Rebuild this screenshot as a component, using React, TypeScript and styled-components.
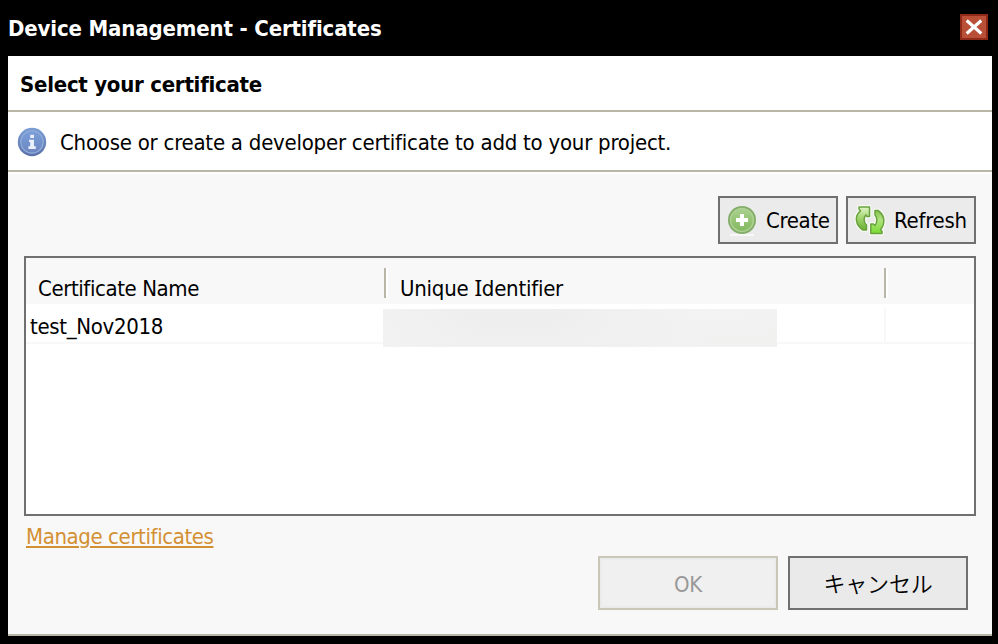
import React from "react";
import styled, { createGlobalStyle } from "styled-components";

const GlobalStyle = createGlobalStyle`
  * { box-sizing: border-box; }
  body { margin: 0; background: #000; }
  button { font: inherit; padding: 0; margin: 0; }
`;

const Dialog = styled.div`
  width: 998px;
  height: 644px;
  padding: 0 6px 8px 8px;
  display: flex;
  flex-direction: column;
  background: #000;
  color: #000;
  font: 22px/30px "DejaVu Sans Condensed", "DejaVu Sans", "Noto Sans CJK JP", sans-serif;
  font-stretch: condensed;
`;

const Label = styled.span<{ $spacing?: number; $bold?: boolean }>`
  display: block;
  margin: ${(p) => (p.$bold ? "0" : "1px 0 -1px")};
  white-space: nowrap;
  font-weight: ${(p) => (p.$bold ? 700 : 400)};
  letter-spacing: ${(p) => p.$spacing ?? (p.$bold ? -0.15 : -0.24)}px;
`;

const SerifedCapital = styled.span`
  font-family: "Noto Sans", sans-serif;
  font-size: 22.4px;
  line-height: 1;
`;

const JapaneseLabel = styled.span`
  margin: -2px 0 2px;
  font: 350 22px/30px "Noto Sans CJK JP", sans-serif;
  letter-spacing: -0.2px;
`;

const TitleBar = styled.header`
  height: 56px;
  flex: none;
  display: flex;
  justify-content: space-between;
  align-items: flex-start;
  padding: 14px 4px 0 0;
  color: #fff;
`;

const CloseButton = styled.button`
  width: 28px;
  height: 26px;
  border: 2px solid #8f2a18;
  background: #b94f37;
  display: grid;
  place-items: center;
`;

const Panel = styled.main`
  flex: 1;
  display: flex;
  flex-direction: column;
  background: #f8f8f8;
  border-bottom: 2px solid #b9b6a8;
`;

const Heading = styled.div`
  height: 56px;
  padding: 14px 12px 0;
  background: #fff;
  border-bottom: 2px solid #b9b6a8;
`;

const Info = styled.div`
  height: 60px;
  display: flex;
  padding: 15px 0 0 9px;
  gap: 13px;
  background: #fff;
  border-bottom: 2px solid #b9b6a8;
`;

const Content = styled.section`
  flex: 1;
  border-top: 2px solid #fff;
  padding: 22px 16px 0;
`;

const Toolbar = styled.div`
  display: flex;
  justify-content: flex-end;
  gap: 8px;
`;

const ToolButton = styled.button<{ $width: number }>`
  width: ${(p) => p.$width}px;
  height: 48px;
  display: flex;
  align-items: center;
  gap: 8px;
  padding-left: 6px;
  border: 2px solid #707070;
  background: #ebebeb;
  color: #000;
`;

const Table = styled.div`
  margin-top: 12px;
  height: 260px;
  border: 2px solid #707070;
  background: #fff;
`;

const HeaderRow = styled.div`
  height: 46px;
  display: grid;
  grid-template-columns: 360px 500px 1fr;
  padding-top: 10px;
  background: #f8f8f8;
`;

const HeaderCell = styled.div<{ $divided?: boolean; $inset: number }>`
  height: 30px;
  padding: 5px 0 0 ${(p) => p.$inset}px;
  border-right: ${(p) => (p.$divided ? "2px solid #b9b6a8" : "0")};
  box-shadow: ${(p) => (p.$divided ? "2px 0 #fff" : "none")};
`;

const Row = styled.div`
  height: 40px;
  display: grid;
  grid-template-columns: 357px 503px 1fr;
  border-bottom: 2px solid #f8f8f8;
`;

const Cell = styled.div`
  padding: 7px 0 0 4px;
`;

const IdCell = styled.div`
  margin-top: 4px;
  height: 34px;
  padding-top: 1px;
  border-right: 2px solid #f8f8f8;
`;

const MaskedId = styled.div`
  width: 394px;
  height: 38px;
  background:
    radial-gradient(ellipse 190px 70px at 130px 0, #eeeeee 20%, #eeeeee00 100%),
    linear-gradient(172deg, #f4f4f4 0%, #f4f4f4 20%, #f2f2f2 70%, #f1f1f0 100%);
`;

const ManageLink = styled.a`
  display: flex;
  width: max-content;
  margin: 5px 0 0 2px;
  color: #d39033;
  text-decoration: underline;
  text-decoration-thickness: 2px;
  text-underline-offset: 2px;
`;

const Actions = styled.div`
  display: flex;
  justify-content: flex-end;
  gap: 10px;
  margin: 5px 8px 0 0;
`;

const ActionButton = styled.button<{ $muted?: boolean }>`
  width: 180px;
  height: 54px;
  padding-top: 2px;
  display: grid;
  place-items: center;
  border: 2px solid ${(p) => (p.$muted ? "#cac7b8" : "#707070")};
  background: ${(p) => (p.$muted ? "#f0f0f0" : "#eaeaea")};
  box-shadow: ${(p) => (p.$muted ? "inset 0 0 0 2px #ebebeb" : "none")};
  color: ${(p) => (p.$muted ? "#999" : "#000")};
`;

const CloseIcon = () => (
  <svg width="24" height="22" viewBox="0 0 24 22">
    <path d="M4.700 4.500 19.300 17.500M19.300 4.500 4.700 17.500" stroke="#fff" strokeWidth="3.100" />
  </svg>
);

const InfoIcon = () => (
  <svg width="30" height="30" viewBox="0 0 30 30">
    <defs>
      <linearGradient id="info" x2="0" y2="1">
        <stop stopColor="#7b9fd6" />
        <stop offset="1" stopColor="#5a70aa" />
      </linearGradient>
      <linearGradient id="infoFace" x2="0" y2="1">
        <stop stopColor="#7a9fda" />
        <stop offset="1" stopColor="#6c86c0" />
      </linearGradient>
    </defs>
    <circle cx="15" cy="15" r="14.200" fill="url(#info)" />
    <circle cx="15" cy="15" r="11.200" fill="url(#infoFace)" stroke="#93add9" strokeWidth="1.200" />
    <path d="M13.200 7.700h3.800v3.400h-3.800zM12 12.700h5v6.500h1.800V22H11.400v-2.800h1.800V15H12z" fill="#e9effc" />
  </svg>
);

const CreateIcon = () => (
  <svg width="32" height="32" viewBox="0 0 32 32">
    <defs>
      <linearGradient id="create" x2="0" y2="1">
        <stop stopColor="#a9d18d" />
        <stop offset="1" stopColor="#83b95f" />
      </linearGradient>
    </defs>
    <path d="M4 30h24v2H4z" fill="#f8f8f8" />
    <circle cx="16" cy="16" r="14" fill="#84ad69" />
    <circle cx="16" cy="16" r="11.400" fill="url(#create)" stroke="#aed193" strokeWidth="1.500" />
    <path d="M14 10h4v4h4v4h-4v4h-4v-4h-4v-4h4z" fill="#fff" />
  </svg>
);

const upArrow = "M5 3H15.500v9.500h-2.500l-1.200-1.500C9.500 13.500 9.500 18.500 12.500 21v5H9C1.500 21.500 0 12 6.500 6.800L5 5z";
const downArrow = "M28 29.500H16.800V20h2.500l1.700 1.500c2.500-3 2.500-8 0-10.500v-4.500h3c7 4.500 7.500 13.500 2.500 19L28 27.500z";

const RefreshIcon = () => (
  <svg width="32" height="32" viewBox="0 0 32 32">
    <defs>
      <linearGradient id="up" x2="0" y2="1">
        <stop stopColor="#e0f6c8" />
        <stop offset="0.450" stopColor="#a5d673" />
        <stop offset="1" stopColor="#69b02d" />
      </linearGradient>
      <linearGradient id="down" x2="0" y2="1">
        <stop stopColor="#86c24f" />
        <stop offset="0.400" stopColor="#b0e280" />
        <stop offset="1" stopColor="#79dc33" />
      </linearGradient>
    </defs>
    <g strokeLinejoin="round">
      <path d={upArrow} fill="none" stroke="#f6faf1" strokeWidth="4" />
      <path d={downArrow} fill="none" stroke="#f6faf1" strokeWidth="4" />
      <path d={upArrow} fill="url(#up)" stroke="#6aa23f" strokeWidth="1.500" />
      <path d={downArrow} fill="url(#down)" stroke="#6aa23f" strokeWidth="1.500" />
    </g>
  </svg>
);

export default function App() {
  return (
    <>
      <GlobalStyle />
      <Dialog>
        <TitleBar>
          <Label $bold>Device Management - Certificates</Label>
          <CloseButton aria-label="Close"><CloseIcon /></CloseButton>
        </TitleBar>
        <Panel>
          <Heading><Label $bold $spacing={-0.25}>Select your certificate</Label></Heading>
          <Info>
            <InfoIcon />
            <Label>Choose or create a developer certificate to add to your project.</Label>
          </Info>
          <Content>
            <Toolbar>
              <ToolButton $width={120}><CreateIcon /><Label $spacing={-0.35}>Create</Label></ToolButton>
              <ToolButton $width={130}><RefreshIcon /><Label>Refresh</Label></ToolButton>
            </Toolbar>
            <Table>
              <HeaderRow>
                <HeaderCell $divided $inset={12}><Label $spacing={-0.41}>Certificate Name</Label></HeaderCell>
                <HeaderCell $divided $inset={14}>
                  <Label>Unique <SerifedCapital>I</SerifedCapital>dentifier</Label>
                </HeaderCell>
                <HeaderCell $inset={14} />
              </HeaderRow>
              <Row>
                <Cell><Label $spacing={-0.32}>test_Nov2018</Label></Cell>
                <IdCell><MaskedId /></IdCell>
              </Row>
            </Table>
            <ManageLink><Label $spacing={-0.4}>Manage certificates</Label></ManageLink>
            <Actions>
              <ActionButton $muted disabled><Label>OK</Label></ActionButton>
              <ActionButton><JapaneseLabel>キャンセル</JapaneseLabel></ActionButton>
            </Actions>
          </Content>
        </Panel>
      </Dialog>
    </>
  );
}
